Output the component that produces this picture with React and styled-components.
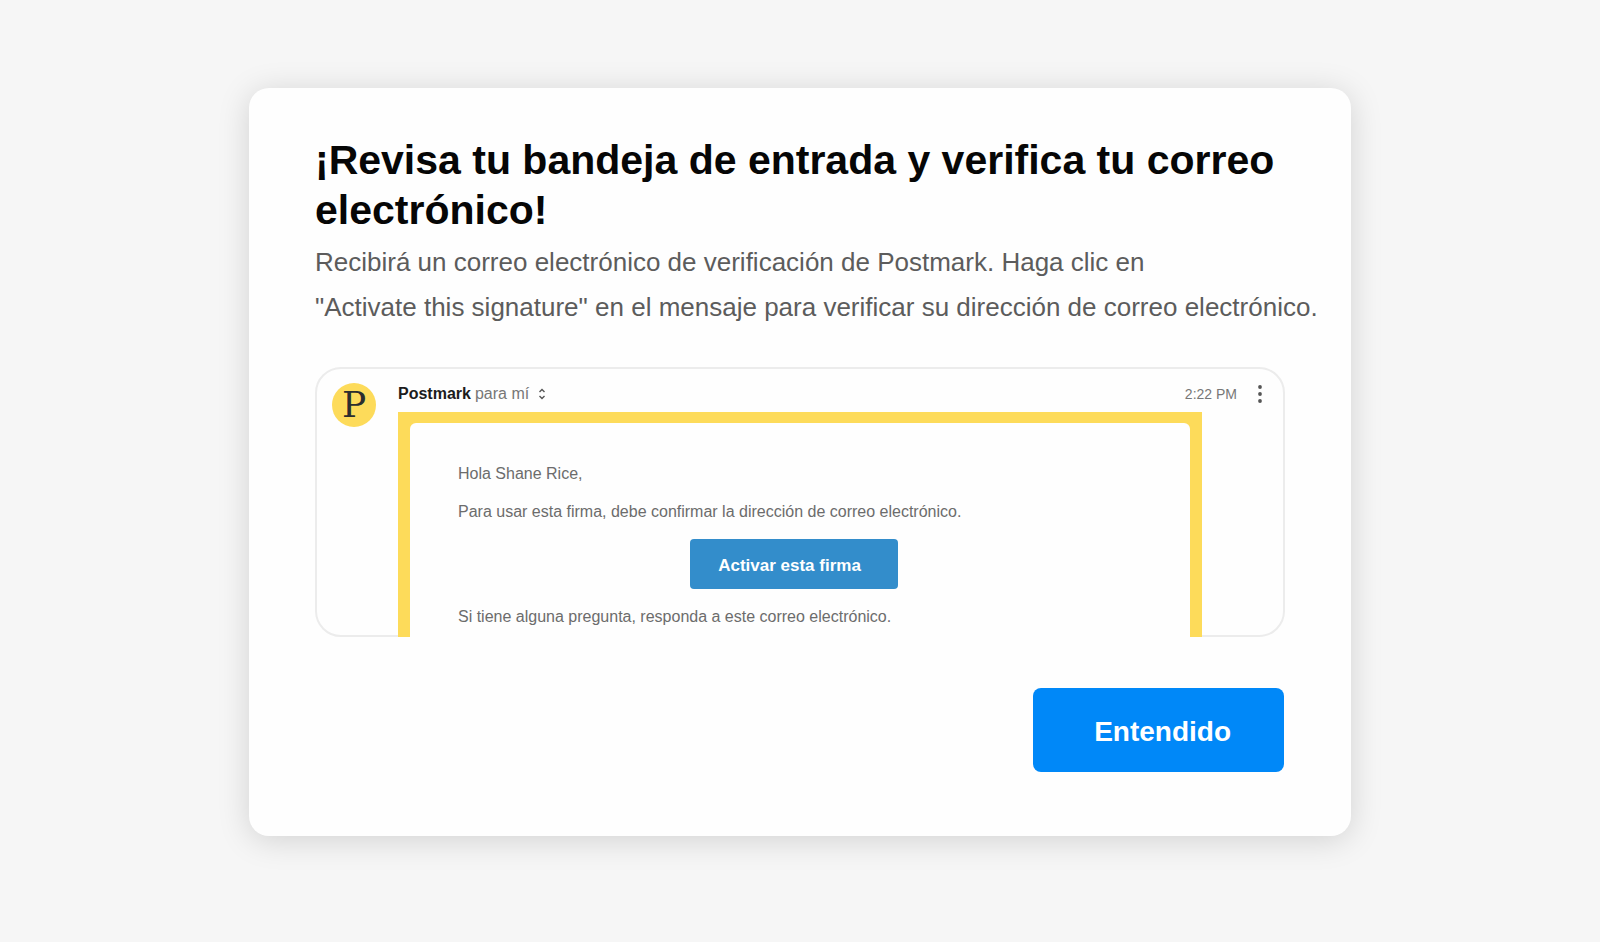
import styled, { createGlobalStyle } from "styled-components"

const GlobalStyle = createGlobalStyle`
* {
    box-sizing: border-box;
}
html, body {
    margin: 0;
    background-color: #f6f6f6;
    font-family: "Liberation Sans", Arial, Helvetica, sans-serif;
}
`
const Fondo = styled.div`
    display: flex;
    justify-content: center;
    align-items: flex-start;
    min-height: 100vh;
    padding: 88px 24px;
`
const Tarjeta = styled.main`
    width: 100%;
    max-width: 1102px;
    padding: 47px 30px 64px 66px;
    border-radius: 20px;
    background-color: #fefefe;
    box-shadow: 0 4px 32px rgba(0, 0, 0, 0.15);
`
const Titulo = styled.h1`
    margin: 0;
    color: #060606;
    font-size: 41px;
    font-weight: 700;
    line-height: 50px;
`
const Descripcion = styled.p`
    margin: 5px 0 0;
    color: #5c5c5c;
    font-size: 26px;
    line-height: 45px;
`
const Correo = styled.section`
    display: flex;
    align-items: flex-start;
    gap: 22px;
    margin: 37px 36px 0 0;
    padding: 14px 18px 0 15px;
    border: 2px solid #ececec;
    border-radius: 26px;
`
const Avatar = styled.div`
    flex: none;
    width: 44px;
    height: 44px;
    border-radius: 50%;
    background-color: #fddb5a;
    color: #2b2d2e;
    font-family: "DejaVu Serif", serif;
    font-size: 36px;
    line-height: 44px;
    text-align: center;
`
const Contenido = styled.div`
    flex: 1;
    min-width: 0;
`
const Encabezado = styled.header`
    display: flex;
    align-items: center;
    height: 22px;
    color: #777;
    font-size: 16px;
`
const Remitente = styled.strong`
    margin-right: 4px;
    color: #1c1c1c;
`
const BotonIcono = styled.button`
    display: flex;
    align-items: center;
    justify-content: center;
    width: 10px;
    height: 22px;
    margin: 0 0 0 8px;
    padding: 0;
    border: none;
    background: none;
    cursor: pointer;
`
const Hora = styled.time`
    margin: 0 10px 0 auto;
    font-size: 14px;
`
const Mensaje = styled.div`
    margin: 7px 63px -2px 0;
    padding: 11px 12px 0;
    background-color: #fddb5a;
`
const Hoja = styled.div`
    padding: 39px 60px 8px 48px;
    border-radius: 6px 6px 0 0;
    background-color: #fefefe;
`
const Texto = styled.p`
    margin: 0 0 14px;
    color: #6c6c6c;
    font-size: 16px;
    line-height: 24px;
    &:last-child {
        margin-bottom: 0;
    }
`
const Activar = styled.button`
    display: block;
    margin: 15px auto 16px;
    padding: 17px 37px 13px 28px;
    border: none;
    border-radius: 4px;
    background-color: #338dcb;
    color: white;
    font-family: inherit;
    font-size: 17px;
    font-weight: 700;
    line-height: 20px;
    cursor: pointer;
`
const Acciones = styled.div`
    display: flex;
    justify-content: flex-end;
    margin: 51px 37px 0 0;
`
const Entendido = styled.button`
    padding: 28px 53px 24px 61px;
    border: none;
    border-radius: 8px;
    background-color: #0088f8;
    color: white;
    font-family: inherit;
    font-size: 28px;
    font-weight: 700;
    line-height: 32px;
    cursor: pointer;
`

function App() {
    return (
        <>
            <GlobalStyle />
            <Fondo>
                <Tarjeta>
                    <Titulo>¡Revisa tu bandeja de entrada y verifica tu correo electrónico!</Titulo>
                    <Descripcion>
                        Recibirá un correo electrónico de verificación de Postmark. Haga clic en
                        <br />
                        "Activate this signature" en el mensaje para verificar su dirección de correo electrónico.
                    </Descripcion>
                    <Correo>
                        <Avatar>P</Avatar>
                        <Contenido>
                            <Encabezado>
                                <Remitente>Postmark</Remitente>
                                <span>para mí</span>
                                <BotonIcono aria-label="Ver detalles">
                                    <svg width="8" height="12" viewBox="0 0 8 12" fill="none" stroke="#555" strokeWidth="1.4">
                                        <path d="M1.5 4L4 1.5L6.5 4M1.5 8L4 10.5L6.5 8" />
                                    </svg>
                                </BotonIcono>
                                <Hora>2:22 PM</Hora>
                                <BotonIcono aria-label="Más opciones">
                                    <svg width="4" height="18" viewBox="0 0 4 18" fill="#555">
                                        <circle cx="2" cy="2" r="1.9" />
                                        <circle cx="2" cy="9" r="1.9" />
                                        <circle cx="2" cy="16" r="1.9" />
                                    </svg>
                                </BotonIcono>
                            </Encabezado>
                            <Mensaje>
                                <Hoja>
                                    <Texto>Hola Shane Rice,</Texto>
                                    <Texto>Para usar esta firma, debe confirmar la dirección de correo electrónico.</Texto>
                                    <Activar>Activar esta firma</Activar>
                                    <Texto>Si tiene alguna pregunta, responda a este correo electrónico.</Texto>
                                </Hoja>
                            </Mensaje>
                        </Contenido>
                    </Correo>
                    <Acciones>
                        <Entendido>Entendido</Entendido>
                    </Acciones>
                </Tarjeta>
            </Fondo>
        </>
    )
}

export default App
